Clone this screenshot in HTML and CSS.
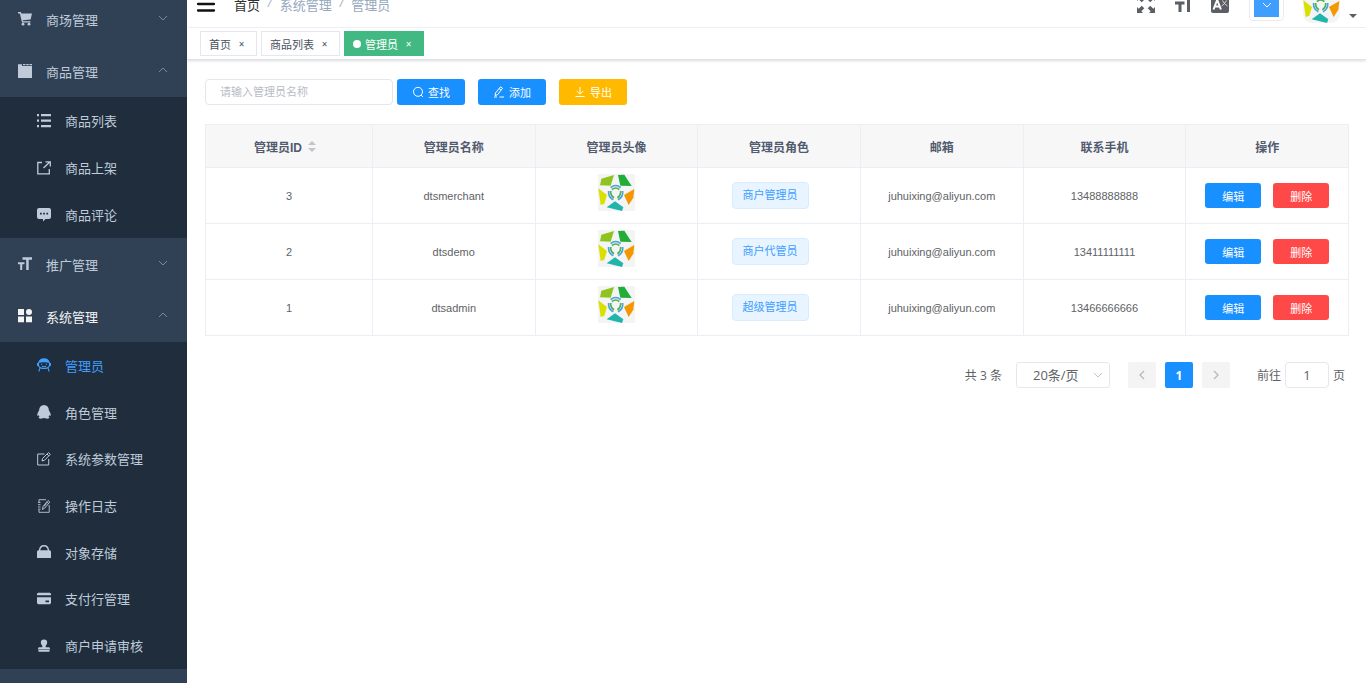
FILE: index.html
```html
<!DOCTYPE html>
<html lang="zh-CN">
<head>
<meta charset="utf-8">
<title>管理员</title>
<link rel="stylesheet" href="styles.css">
</head>
<body>
<svg class="sprite" aria-hidden="true">
  <symbol id="logo" viewBox="0 0 111 111">
    <rect width="111" height="111" fill="#f4f4f4"/>
    <path fill="#8fc31f" d="M10 14 48 3 38 35 6 34z"/>
    <path fill="#22ac38" d="M60 3 79 2 101 36 67 35z"/>
    <path fill="#d9e000" d="M1 43 27 63 19 89 8 93z"/>
    <path fill="#f39800" d="M109 45 106 71 92 93 78 63z"/>
    <path fill="#1fb5ad" d="M51 82 76 100 72 111 26 100z"/>
    <g fill="none" stroke-width="5">
      <path stroke="#45a5dc" d="M38 41Q53 28 68 41M32 51Q30 69 46 77M74 51Q76 69 60 77"/>
      <path stroke="#4bb04f" d="M42 47Q53 37 64 47M38 51Q37 65 48 71M68 51Q69 65 58 71"/>
    </g>
  </symbol>
  <symbol id="down" viewBox="0 0 10 10"><path d="M1 3l4 4 4-4" fill="none" stroke="currentColor"/></symbol>
  <symbol id="up" viewBox="0 0 10 10"><path d="M1 7l4-4 4 4" fill="none" stroke="currentColor"/></symbol>
  <symbol id="size" viewBox="0 0 14 14"><path fill="currentColor" d="M4.500.3H14v2.400h-3.300V13H8.200V2.700H4.500zM0 5.300h6.500v2H4.200V13H2.200V7.300H0z"/></symbol>
</svg>
<div class="app">
  <aside class="sidebar">
    <nav class="menu">
      <a class="group" href="#"><svg class="icon" viewBox="0 0 14 14"><path fill="currentColor" d="M0 0h2.800l.6 1.500H14l-1.400 6-7.900.8.300 1h7.500v1.200H4L1.900 1.600H0z"/><circle cx="5" cy="12.200" r="1.400" fill="currentColor"/><circle cx="11" cy="12.200" r="1.400" fill="currentColor"/></svg><span class="label">商场管理</span><svg class="arrow"><use href="#down"/></svg></a>
      <a class="group" href="#"><svg class="icon" viewBox="0 0 14 14"><path fill="currentColor" d="M0 .2h4V2h10v12H0zM5 0h2.500v1.200H5zM8.300 0h2.400v1.200H8.300zM11.500 0H14v1.200h-2.500z"/></svg><span class="label">商品管理</span><svg class="arrow"><use href="#up"/></svg></a>
      <div class="submenu">
        <a class="item" href="#"><svg class="icon" viewBox="0 0 14 14"><path fill="currentColor" d="M0 0h2v2.200H0zM4 0h10v2.200H4zM0 5.500h2v2.200H0zM4 5.500h10v2.200H4zM0 11h2v2.200H0zM4 11h10v2.200H4z"/></svg>商品列表</a>
        <a class="item" href="#"><svg class="icon" viewBox="0 0 14 14"><path fill="none" stroke="currentColor" stroke-width="1.300" d="M5 1.500H.8v11.300h11.500V8M6.500 7 13 .8M8.500.8h4.800v4.800"/></svg>商品上架</a>
        <a class="item" href="#"><svg class="icon" viewBox="0 0 14 14"><path fill="currentColor" fill-rule="evenodd" d="M2 0h10q2 0 2 2v7q0 2-2 2H8.500L6 13.500V11H2q-2 0-2-2V2q0-2 2-2zM3 4.700v1.700h1.700V4.700zm3.200 0v1.700h1.700V4.700zm3.200 0v1.700h1.700V4.700z"/></svg>商品评论</a>
      </div>
      <a class="group" href="#"><svg class="icon"><use href="#size"/></svg><span class="label">推广管理</span><svg class="arrow"><use href="#down"/></svg></a>
      <a class="group current" href="#"><svg class="icon" viewBox="0 0 14 14"><path fill="currentColor" d="M0 0h6v6H0zM0 7.500h6v5.700H0zM8 7.500h6v5.700H8z"/><circle cx="11" cy="3" r="3" fill="currentColor"/></svg><span class="label">系统管理</span><svg class="arrow"><use href="#up"/></svg></a>
      <div class="submenu long">
        <a class="item active" href="#"><svg class="icon" viewBox="0 0 14 14"><path fill="none" stroke="currentColor" stroke-width="1.100" d="M1.500 4.500v3q1 3 5.500 3t5.500-3v-3M3 9.800 1.800 13.500M11 9.800l1.200 3.700M.6 5v3M13.400 5v3M5 8.200q2 1 4 0"/><path fill="currentColor" d="M1 5Q2 .3 7 .3T13 5Q7 3.500 1 5zM4 5.700h1.200v1H4zM8.800 5.700H10v1H8.800z"/></svg>管理员</a>
        <a class="item" href="#"><svg class="icon" viewBox="0 0 14 14"><path fill="currentColor" d="M7 0q4.600.2 4.900 5.200Q13.700 8 14 10.800l-1.600-.5-.8 1.500 1 1.200-2.300.8L7 13l-3.300.8-2.300-.8 1-1.200-.8-1.500-1.600.5Q.3 8 2.100 5.200 2.400.2 7 0z"/></svg>角色管理</a>
        <a class="item" href="#"><svg class="icon" viewBox="0 0 14 14"><path fill="none" stroke="currentColor" d="M7.500 2H.7v11h11V7M5 9l.6-2.600L11.500.6l1.800 1.700-5.800 6L5 9M10 2l1.800 1.800"/></svg>系统参数管理</a>
        <a class="item" href="#"><svg class="icon" viewBox="0 0 14 14"><path fill="none" stroke="currentColor" stroke-width=".9" d="M2 3V.7h7M12.200 6v7.300H2V11M1 3.500h2.500M1 5.700h2.500M1 8h2.500M1 10.200h2.500M5.500 10.500l.5-3 5-6 1.800 1.500-5 6-2.300 1.500M9.700 3l1.800 1.500M7 7.500l2.500-3"/></svg>操作日志</a>
        <a class="item" href="#"><svg class="icon" viewBox="0 0 14 14"><path fill="currentColor" d="M1 5.300h12l1 1V13H0V6.300z"/><path fill="none" stroke="currentColor" stroke-width="1.400" d="M2.500 6Q2.800.8 7 .8T11.500 6"/></svg>对象存储</a>
        <a class="item" href="#"><svg class="icon" viewBox="0 0 14 14"><path fill="currentColor" fill-rule="evenodd" d="M1 .7h12l1 1v1.500H0V1.700zM0 5.300h14V11l-1 1.300H1L0 11zM8.500 8.500v1.800H12V8.500z"/></svg>支付行管理</a>
        <a class="item" href="#"><svg class="icon" viewBox="0 0 14 14"><path fill="currentColor" d="M7 .5q3.200 0 3.200 3.200 0 1.500-1.500 3v1.500h3.700l.8 2.300H.8l.8-2.300h3.700V6.700q-1.500-1.500-1.500-3Q3.800.5 7 .5zM1.500 11h11v1.700h-11z"/></svg>商户申请审核</a>
      </div>
    </nav>
  </aside>
  <div class="main">
    <header class="navbar">
      <button class="plain burger" aria-label="菜单"><svg viewBox="0 0 20 18"><path stroke="#111" stroke-width="2.300" stroke-linecap="round" d="M2 2h16M2 9h16M2 15.500h16"/></svg></button>
      <nav class="crumbs"><a href="#">首页</a><i>/</i><span>系统管理</span><i>/</i><span>管理员</span></nav>
      <div class="tools">
        <button class="plain" aria-label="全屏"><svg class="tool" viewBox="0 0 18 18"><path fill="#5a5e66" d="M0 0h6L4.300 1.700 7.300 4.700 4.700 7.300 1.700 4.300 0 6zM18 0h-6l1.700 1.700-3 3 2.600 2.600 3-3L18 6zM0 18h6l-1.700-1.700 3-3-2.600-2.600-3 3L0 12zM18 18h-6l1.700-1.700-3-3 2.600-2.600 3 3L18 12z"/></svg></button>
        <button class="plain" aria-label="字号"><svg class="tool" viewBox="0 0 18 18"><path fill="#5a5e66" d="M6 0h11v2.500h-1V17h-3V2.500H6zM1 6.500h9.500v3H7.500V17h-3V9.500H1z"/></svg></button>
        <button class="plain lang" aria-label="语言"><svg class="tool" viewBox="0 0 18 18"><rect width="18" height="18" rx="2" fill="#5a5e66"/><path fill="none" stroke="#fff" stroke-width="2" d="M2.500 14.500 6.200 5l3.700 9.500M3.800 11.500h4.800"/><path fill="none" stroke="#ddd" stroke-width=".9" d="M10 4h7M13.500 2v2M11.500 5.500q2 4 5 5.500M15.500 5.500q-2 4-5 5.500"/></svg></button>
        <button class="theme" aria-label="主题"><span class="swatch"><svg><use href="#down"/></svg></span></button>
        <button class="plain user" aria-label="用户"><svg class="avatar"><use href="#logo"/></svg><span class="caret"></span></button>
      </div>
    </header>
    <nav class="tabs">
      <a class="tab" href="#">首页<span class="close">×</span></a>
      <a class="tab" href="#">商品列表<span class="close">×</span></a>
      <a class="tab on" href="#"><span class="dot"></span>管理员<span class="close">×</span></a>
    </nav>
    <main class="content">
      <form class="filter">
        <input class="field" type="text" aria-label="管理员名称" placeholder="请输入管理员名称">
        <div class="actions">
          <button class="btn" type="button"><svg viewBox="0 0 12 12"><circle cx="6" cy="5.800" r="4.500"/><path d="M9 9l2 2"/></svg>查找</button>
          <button class="btn" type="button"><svg viewBox="0 0 12 12"><path d="M2 9.500 2.500 7 7.500.8l2 1.500-5 6.500zM1 11h3M6.500 11H11M6 2.500l2 1.600"/></svg>添加</button>
          <button class="btn warn" type="button"><svg viewBox="0 0 12 12"><path d="M6 1v7M2.800 5 6 8.200 9.200 5M1.500 10.500h9"/></svg>导出</button>
        </div>
      </form>
      <table class="grid">
        <thead>
          <tr><th class="first"><div class="sortable">管理员ID<span class="sort"></span></div></th><th>管理员名称</th><th>管理员头像</th><th>管理员角色</th><th>邮箱</th><th>联系手机</th><th>操作</th></tr>
        </thead>
        <tbody>
          <tr><td>3</td><td>dtsmerchant</td><td><svg class="photo"><use href="#logo"/></svg></td><td><span class="tag">商户管理员</span></td><td>juhuixing@aliyun.com</td><td>13488888888</td><td><div class="ops"><button class="btn small">编辑</button><button class="btn small danger">删除</button></div></td></tr>
          <tr><td>2</td><td>dtsdemo</td><td><svg class="photo"><use href="#logo"/></svg></td><td><span class="tag">商户代管员</span></td><td>juhuixing@aliyun.com</td><td>13411111111</td><td><div class="ops"><button class="btn small">编辑</button><button class="btn small danger">删除</button></div></td></tr>
          <tr><td>1</td><td>dtsadmin</td><td><svg class="photo"><use href="#logo"/></svg></td><td><span class="tag">超级管理员</span></td><td>juhuixing@aliyun.com</td><td>13466666666</td><td><div class="ops"><button class="btn small">编辑</button><button class="btn small danger">删除</button></div></td></tr>
        </tbody>
      </table>
      <div class="pager">
        <span>共 3 条</span>
        <span class="pick"><select aria-label="每页条数"><option>20条/页</option></select><svg><use href="#down"/></svg></span>
        <div class="pages">
          <button class="page" aria-label="上一页" disabled><svg viewBox="0 0 10 10"><path d="M7 1 3 5l4 4"/></svg></button>
          <button class="page now">1</button>
          <button class="page" aria-label="下一页" disabled><svg viewBox="0 0 10 10"><path d="M3 1l4 4-4 4"/></svg></button>
        </div>
        <label class="jump">前往<input type="text" value="1">页</label>
      </div>
    </main>
  </div>
</div>
</body>
</html>
```
FILE: styles.css
```css
* { box-sizing: border-box; }
body {
  margin: 0;
  overflow: hidden;
  font-family: "Liberation Sans", "Noto Sans CJK SC", sans-serif;
  font-size: 11px;
  color: #606266;
  background: #fff;
}
a { color: inherit; text-decoration: none; }
button, input, select { font: inherit; color: inherit; margin: 0; }
.sprite { position: absolute; width: 0; height: 0; }
.app { display: flex; height: 100vh; }

/* sidebar */
.sidebar {
  flex: none;
  width: 187px;
  overflow: hidden;
  background: #304156;
  color: #bfcbd9;
  font-size: 13px;
}
.menu { margin-top: -7px; }
.group { display: flex; align-items: center; height: 52px; padding: 0 19px 0 18px; }
.group.current { color: #f4f4f5; }
.icon { flex: none; width: 14px; height: 14px; margin-right: 14px; }
.label { flex: 1; }
.arrow { width: 10px; height: 10px; margin-bottom: 2px; color: #7c8999; }
.submenu {
  display: flex;
  flex-direction: column;
  min-height: 141px;
  background: #1f2d3d;
}
.submenu.long { min-height: 327px; }
.item { flex: 1; display: flex; align-items: center; padding: 0 37px; white-space: nowrap; }
.item.active { color: #409eff; }

/* header */
.main { flex: 1; min-width: 0; }
.navbar {
  display: flex;
  align-items: center;
  height: 47px;
  margin-top: -19px;
  padding: 0 9px;
  border-bottom: 1px solid #f4f5f7;
}
.plain { display: flex; align-items: center; padding: 0; border: 0; background: none; }
.burger svg { width: 20px; height: 18px; }
.crumbs { display: flex; margin-left: 18px; font-size: 13px; color: #97a8be; }
.crumbs a { color: #303133; }
.crumbs i { margin: 0 8px; color: #a9b1bf; }
.tools { display: flex; align-items: center; margin-left: auto; }
.tool { width: 18px; height: 18px; }
.tools .plain + .plain { margin-left: 19px; }
.tools .lang { margin-right: 20px; }
.theme {
  height: 34px;
  padding: 4px;
  border: 1px solid #e9ebf0;
  border-radius: 4px;
  background: #fff;
}
.swatch { display: flex; align-items: center; justify-content: center; width: 25px; height: 25px; background: #409eff; color: #fff; }
.swatch svg { width: 10px; height: 10px; }
.user { margin-left: 19px; align-items: flex-end; }
.avatar { width: 37px; height: 37px; border-radius: 9px; }
.caret { margin: 0 0 5px 9px; border: 4px solid transparent; border-top-color: #5a5e66; border-bottom: 0; }

/* tabs */
.tabs {
  display: flex;
  align-items: center;
  gap: 4px;
  height: 32px;
  padding: 0 13px;
  border-bottom: 1px solid #e0e3ea;
  box-shadow: 0 1px 3px rgba(0, 0, 0, .14);
}
.tab { display: flex; align-items: center; height: 25px; padding: 0 8px; border: 1px solid #e4e7ef; color: #495060; }
.tab.on { border-color: #42b983; background: #42b983; color: #fff; }
.close { width: 13px; margin-left: 4px; text-align: center; font-family: "Noto Sans", sans-serif; font-size: 10px; }
.dot { width: 8px; height: 8px; margin-right: 4px; border-radius: 50%; background: #fff; }

/* filter */
.content { padding: 19px 17px 0 18px; }
.filter { display: flex; gap: 4px; margin-bottom: 19px; }
.field { width: 188px; height: 26px; padding: 0 14px; border: 1px solid #e4e7ed; border-radius: 4px; }
.field::placeholder { color: #b8bcc6; }
.actions { display: flex; gap: 13px; }
.btn {
  display: flex;
  align-items: center;
  justify-content: center;
  width: 68px;
  height: 26px;
  padding: 0;
  border: 0;
  border-radius: 3px;
  background: #1890ff;
  color: #fff;
}
.btn svg { width: 12px; height: 12px; margin-right: 4px; fill: none; stroke: currentColor; }
.warn { background: #ffba00; }
.small { width: 56px; height: 25px; }
.danger { background: #ff4949; }

/* table */
.grid { width: 100%; table-layout: fixed; border-collapse: collapse; }
.grid th, .grid td { padding: 0; border: 1px solid #ebeff5; text-align: center; }
.grid th { height: 43px; background: #f7f7f7; color: #515a6e; font-size: 12px; }
.grid td { height: 56px; }
.grid .first { width: 14.6%; }
.sortable { display: flex; align-items: center; justify-content: center; }
.sort { display: grid; gap: 3px; margin: 0 8px 0 6px; }
.sort::before, .sort::after { content: ""; border: 4px solid transparent; }
.sort::before { border-top: 0; border-bottom-color: #c0c4cc; }
.sort::after { border-bottom: 0; border-top-color: #c0c4cc; }
.photo { display: block; width: 37px; height: 37px; margin: 0 auto 7px; }
.tag {
  display: inline-block;
  height: 27px;
  margin-right: 18px;
  padding: 0 10px;
  border: 1px solid #d9ecff;
  border-radius: 4px;
  background: #e8f4ff;
  color: #409eff;
  line-height: 25px;
}
.ops { display: flex; justify-content: center; gap: 12px; }

/* pagination */
.pager {
  display: flex;
  align-items: center;
  justify-content: flex-end;
  margin: 26px 4px 0 0;
  font-family: "Open Sans", "Noto Sans CJK SC", sans-serif;
  font-size: 12px;
}
.pick { position: relative; margin: 0 18px 0 14px; }
.pick select { display: block; appearance: none; width: 94px; height: 26px; padding: 0 16px; border: 1px solid #e4e7ed; border-radius: 3px; background: #fff; font-size: 13px; }
.pick svg { position: absolute; top: 8px; right: 7px; width: 10px; height: 10px; color: #c0c4cc; pointer-events: none; }
.pages { display: flex; gap: 9px; }
.page { display: flex; align-items: center; justify-content: center; width: 28px; height: 26px; padding: 0; border: 0; border-radius: 2px; background: #f4f4f5; color: #b4b8c0; }
.page svg { width: 10px; height: 10px; fill: none; stroke: currentColor; stroke-width: 1.3; }
.page.now { background: #1890ff; color: #fff; font-weight: 700; }
.jump { display: flex; align-items: center; gap: 4px; margin-left: 27px; }
.jump input { width: 44px; height: 26px; padding: 0; border: 1px solid #e4e7ed; border-radius: 4px; text-align: center; font-size: 13px; }
```
